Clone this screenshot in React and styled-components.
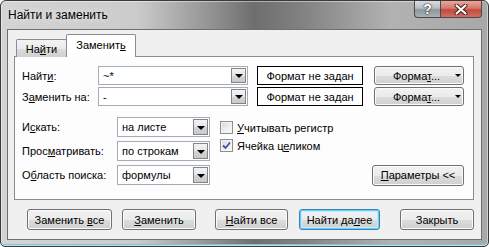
import styled, { createGlobalStyle, css } from "styled-components";

const Global = createGlobalStyle`
  html, body { margin: 0; padding: 0; background: #fff; }
  body {
    font-family: "Liberation Sans", Arial, sans-serif;
    font-size: 11px;
    color: #000;
  }
  * { box-sizing: border-box; }
`;

const Window = styled.div`
  width: 489px;
  height: 247px;
  display: flex;
  flex-direction: column;
  border: 1px solid #3a3a3a;
  border-radius: 6px 6px 5px 5px;
  padding: 0 6px 6px;
  background: linear-gradient(
    90deg,
    #d4d4d4 0%,
    #cbcbcb 28%,
    #8f8f8f 44%,
    #6e6e6e 52%,
    #828282 62%,
    #b2b2b2 80%,
    #a8a8a8 100%
  );
  box-shadow: inset 0 0 0 1px rgba(255, 255, 255, 0.45), inset 0 -2px 0 #7fc6d6;
`;

const TitleBar = styled.div`
  height: 28px;
  display: flex;
  align-items: flex-start;
`;

const Title = styled.div`
  flex: 1;
  padding: 7px 0 0 1px;
  font-size: 12px;
  color: #000;
  text-shadow: 0 0 6px rgba(255, 255, 255, 0.9);
`;

const CaptionButtons = styled.div`
  display: flex;
`;

const CaptionButton = styled.div`
  width: ${(p) => p.$w}px;
  height: 17px;
  display: flex;
  align-items: center;
  justify-content: center;
  border: 1px solid #4a4a4a;
  border-top: none;
  color: #fff;
  font-weight: bold;
  font-size: 14px;
  font-family: "Liberation Sans", Arial, sans-serif;
  text-shadow: 0 0 1px #222, 0 0 2px #222;
  ${(p) =>
    p.$close
      ? css`
          border-radius: 0 0 4px 0;
          background: linear-gradient(#e9a79c 0%, #d8786c 45%, #c24a3c 55%, #d0705f 100%);
        `
      : css`
          border-radius: 0 0 0 4px;
          border-right: none;
          background: linear-gradient(#d9dde0 0%, #b8bdc1 45%, #8f979c 55%, #a9b0b4 100%);
        `}
`;

const Client = styled.div`
  flex: 1;
  display: flex;
  flex-direction: column;
  background: #f0f0f0;
  border: 1px solid #6f6f6f;
  padding: 4px 7px 0 6px;
`;

const TabRow = styled.div`
  display: flex;
  align-items: flex-end;
  height: 23px;
  padding-left: 2px;
  margin-bottom: -1px;
  position: relative;
  z-index: 1;
`;

const Tab = styled.div`
  display: flex;
  align-items: center;
  justify-content: center;
  border: 1px solid #898c95;
  border-bottom: none;
  border-radius: 2px 2px 0 0;
  ${(p) =>
    p.$active
      ? css`
          width: 70px;
          height: 23px;
          background: #fff;
          padding-bottom: 3px;
        `
      : css`
          width: 51px;
          height: 18px;
          margin-right: -1px;
          padding-top: 1px;
          background: linear-gradient(#f3f3f3 0%, #ebebeb 50%, #dddddd 51%, #cfcfcf 100%);
        `}
`;

const Panel = styled.div`
  width: 460px;
  height: 144px;
  background: #fdfdfd;
  border: 1px solid #898c95;
  padding: 9px 0 0 7px;
`;

const TopGrid = styled.div`
  display: grid;
  grid-template-columns: 76px auto auto auto;
  justify-content: start;
  row-gap: 2px;
  align-items: center;
`;

const Label = styled.div`
  white-space: nowrap;
`;

const Combo = styled.div`
  width: ${(p) => p.$w}px;
  height: ${(p) => p.$h}px;
  display: flex;
  align-items: center;
  background: #fff;
  border: 1px solid #a5acb5;
  padding: 1px;
`;

const ComboText = styled.div`
  flex: 1;
  padding-left: 3px;
  white-space: nowrap;
`;

const ArrowBox = styled.div`
  width: 15px;
  height: 100%;
  display: flex;
  align-items: center;
  justify-content: center;
  border: 1px solid #7f8589;
  background: linear-gradient(#f4f4f4 0%, #e6e6e6 50%, #d6d6d6 51%, #c9c9c9 100%);
`;

const Triangle = styled.div`
  width: 0;
  height: 0;
  border-left: 4px solid transparent;
  border-right: 4px solid transparent;
  border-top: 4px solid #000;
  margin-top: 1px;
`;

const FormatBox = styled.div`
  width: 106px;
  height: 19px;
  margin-left: 9px;
  display: flex;
  align-items: center;
  justify-content: center;
  background: #fff;
  border: 1px solid #000;
`;

const buttonFace = css`
  display: flex;
  align-items: center;
  justify-content: center;
  border: 1px solid #707070;
  border-radius: 3px;
  background: linear-gradient(#f2f2f2 0%, #ebebeb 50%, #dddddd 51%, #cfcfcf 100%);
  box-shadow: inset 0 0 0 1px #fbfbfb;
  white-space: nowrap;
`;

const FormatButton = styled.div`
  ${buttonFace};
  width: 90px;
  height: 19px;
  margin-left: 11px;
  justify-content: flex-start;
  padding-left: 18px;
  gap: 15px;
`;

const SmallTriangle = styled.div`
  width: 0;
  height: 0;
  border-left: 3px solid transparent;
  border-right: 3px solid transparent;
  border-top: 3px solid #000;
`;

const BottomGrid = styled.div`
  display: grid;
  grid-template-columns: 95px 93px 254px;
  grid-template-rows: 20px 20px 20px;
  row-gap: 4px;
  margin-top: 11px;
  align-items: center;
`;

const Checks = styled.div`
  grid-column: 3;
  grid-row: 1 / span 2;
  align-self: start;
  display: flex;
  flex-direction: column;
  gap: 5px;
  padding: 4px 0 0 10px;
`;

const CheckRow = styled.div`
  display: flex;
  align-items: center;
  gap: 4px;
`;

const Box = styled.div`
  width: 13px;
  height: 13px;
  display: flex;
  align-items: center;
  justify-content: center;
  border: 1px solid #8e8f8f;
  background: linear-gradient(135deg, #d8d8d8 0%, #f0f0f0 60%, #fafafa 100%);
  box-shadow: inset 0 0 0 1px #f4f4f4;
`;

const ParamsButton = styled.div`
  ${buttonFace};
  grid-column: 3;
  grid-row: 3;
  justify-self: end;
  width: 92px;
  height: 21px;
`;

const ButtonRow = styled.div`
  display: flex;
  padding: 9px 0 0 13px;
`;

const Button = styled.div`
  ${buttonFace};
  width: ${(p) => p.$w}px;
  height: 21px;
  margin-left: ${(p) => p.$ml || 0}px;
  ${(p) =>
    p.$focus &&
    css`
      border-color: #3c7fb1;
      box-shadow: inset 0 0 0 1px #5fd3fa, inset 0 0 0 2px #bfeafa;
    `}
`;

function Check({ checked }) {
  return (
    <Box>
      {checked && (
        <svg width="9" height="9" viewBox="0 0 9 9">
          <path d="M1 4.5 L3.5 7 L8 1.5" fill="none" stroke="#3c52a8" strokeWidth="1.8" />
        </svg>
      )}
    </Box>
  );
}

function Dropdown({ w, h, value }) {
  return (
    <Combo $w={w} $h={h}>
      <ComboText>{value}</ComboText>
      <ArrowBox>
        <Triangle />
      </ArrowBox>
    </Combo>
  );
}

function CloseGlyph() {
  return (
    <svg width="14" height="11" viewBox="0 0 14 11">
      <path d="M2.5 1.5 L11.5 9.5 M11.5 1.5 L2.5 9.5" stroke="#3a1a16" strokeWidth="4" strokeLinecap="round" />
      <path d="M2.5 1.5 L11.5 9.5 M11.5 1.5 L2.5 9.5" stroke="#fff" strokeWidth="2.2" strokeLinecap="round" />
    </svg>
  );
}

export default function App() {
  return (
    <>
      <Global />
      <Window>
        <TitleBar>
          <Title>Найти и заменить</Title>
          <CaptionButtons>
            <CaptionButton $w={26}>?</CaptionButton>
            <CaptionButton $w={42} $close>
              <CloseGlyph />
            </CaptionButton>
          </CaptionButtons>
        </TitleBar>
        <Client>
          <TabRow>
            <Tab>
              <span>
                На<u>й</u>ти
              </span>
            </Tab>
            <Tab $active>
              <span>
                Заменит<u>ь</u>
              </span>
            </Tab>
          </TabRow>
          <Panel>
            <TopGrid>
              <Label>
                Найт<u>и</u>:
              </Label>
              <Dropdown w={150} h={19} value="~*" />
              <FormatBox>Формат не задан</FormatBox>
              <FormatButton>
                <span>
                  Форма<u>т</u>...
                </span>
                <SmallTriangle />
              </FormatButton>
              <Label>
                З<u>а</u>менить на:
              </Label>
              <Dropdown w={150} h={19} value="-" />
              <FormatBox>Формат не задан</FormatBox>
              <FormatButton>
                <span>
                  Форма<u>т</u>...
                </span>
                <SmallTriangle />
              </FormatButton>
            </TopGrid>
            <BottomGrid>
              <Label>
                И<u>с</u>кать:
              </Label>
              <Dropdown w={93} h={20} value="на листе" />
              <Checks>
                <CheckRow>
                  <Check />
                  <span>
                    <u>У</u>читывать регистр
                  </span>
                </CheckRow>
                <CheckRow>
                  <Check checked />
                  <span>
                    Ячейка ц<u>е</u>ликом
                  </span>
                </CheckRow>
              </Checks>
              <Label>
                Прос<u>м</u>атривать:
              </Label>
              <Dropdown w={93} h={20} value="по строкам" />
              <Label>
                О<u>б</u>ласть поиска:
              </Label>
              <Dropdown w={93} h={20} value="формулы" />
              <ParamsButton>
                <span>
                  <u>П</u>араметры &lt;&lt;
                </span>
              </ParamsButton>
            </BottomGrid>
          </Panel>
          <ButtonRow>
            <Button $w={85}>
              <span>
                Заменить <u>в</u>се
              </span>
            </Button>
            <Button $w={74} $ml={10}>
              <span>
                <u>З</u>аменить
              </span>
            </Button>
            <Button $w={73} $ml={19}>
              <span>
                <u>Н</u>айти все
              </span>
            </Button>
            <Button $w={81} $ml={11} $focus>
              <span>
                Найти да<u>л</u>ее
              </span>
            </Button>
            <Button $w={74} $ml={20}>
              <span>Закрыть</span>
            </Button>
          </ButtonRow>
        </Client>
      </Window>
    </>
  );
}
